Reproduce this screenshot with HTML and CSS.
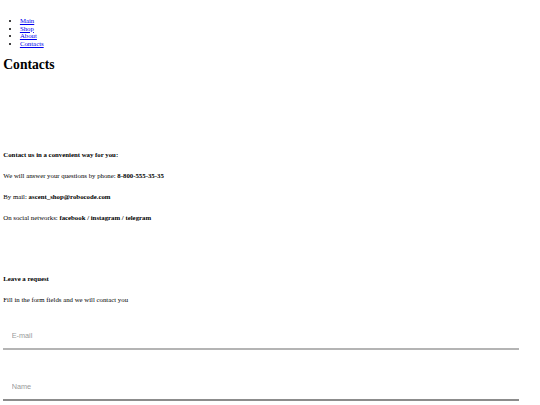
FILE: index.html
```html
<!DOCTYPE html>
<html lang="en">
<head>
    <meta charset="UTF-8">
    <meta name="viewport" content="width=device-width, initial-scale=1.0">
    <title>Contacts</title>
    <link rel="stylesheet" href="styles.css">
</head>
<body>

    <!-- Top menu -->
    <header class="site-header">
        <nav>
            <ul class="menu">
                <li><a href="#">Main</a></li>
                <li><a href="#">Shop</a></li>
                <li><a href="#">About</a></li>
                <li><a href="#">Contacts</a></li>
            </ul>
        </nav>
    </header>

    <main>
        <h1 class="page-title">Contacts</h1>

        <!-- Ways to reach the shop -->
        <section class="contacts-info">
            <h4 class="block-title">Contact us in a convenient way for you:</h4>
            <p>We will answer your questions by phone: <b>8-800-555-35-35</b></p>
            <p>By mail: <b>ascent_shop@robocode.com</b></p>
            <p>On social networks: <b>facebook / instagram / telegram</b></p>
        </section>

        <!-- Request form -->
        <section class="request">
            <h4 class="block-title">Leave a request</h4>
            <p>Fill in the form fields and we will contact you</p>
            <form class="request-form">
                <input type="email" class="field" placeholder="E-mail">
                <input type="text" class="field field-dark" placeholder="Name">
            </form>
        </section>
    </main>

</body>
</html>
```

FILE: styles.css
```css
/* General page styling */
body {
    font-family: "Liberation Serif", "Times New Roman", serif;
    font-size: 6.8px;
    line-height: 7.6px;
    margin: 0;
    padding: 0 3.3px;
    color: #000;
}

/* Menu */
.site-header {
    padding-top: 17px;
}

.menu {
    margin: 0;
    padding-left: 16.6px;
}

.menu a {
    color: #0000ee;
}

.page-title {
    font-size: 13.6px;
    line-height: 15px;
    margin: 9.8px 0 0;
}

/* Text blocks */
.contacts-info {
    margin-top: 79px;
}

.block-title {
    font-size: 6.8px;
    margin: 0 0 13.4px;
}

p {
    margin: 0 0 13.4px;
}

.request {
    margin-top: 53.4px;
}

/* Form */
.request-form {
    display: flex;
    flex-direction: column;
    gap: 24px;
    margin-top: 19.2px;
}

.field {
    width: 516px;
    height: 27px;
    box-sizing: border-box;
    padding: 0 8.4px;
    border: none;
    border-bottom: 2px solid #b4b4b4;
    outline: none;
    font-family: "Liberation Sans", Arial, sans-serif;
    font-size: 7.3px;
    background: transparent;
}

.field-dark {
    border-bottom-color: #8c8c8c;
}

.field::placeholder {
    color: #9a9a9a;
}
```
